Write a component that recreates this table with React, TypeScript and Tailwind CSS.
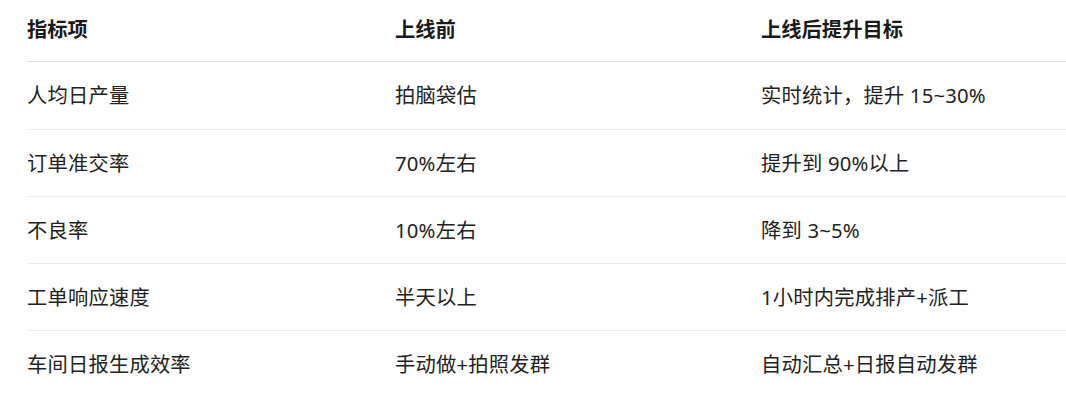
const rows: [string, string, string][] = [
  ["人均日产量", "拍脑袋估", "实时统计，提升 15~30%"],
  ["订单准交率", "70%左右", "提升到 90%以上"],
  ["不良率", "10%左右", "降到 3~5%"],
  ["工单响应速度", "半天以上", "1小时内完成排产+派工"],
  ["车间日报生成效率", "手动做+拍照发群", "自动汇总+日报自动发群"],
];

export default function App() {
  return (
    <div
      className="w-[1066px] h-[405px] bg-white pl-[27px] text-[20.3px] text-[#222222]"
      style={{ fontFamily: '"Noto Sans", "Noto Sans CJK SC", sans-serif' }}
    >
      <div className="grid grid-cols-[368px_366px_1fr] h-[62px] items-center border-b border-[#dcdcdc] font-bold text-[#1a1a1a] pb-[2px]">
        <div>指标项</div>
        <div>上线前</div>
        <div>上线后提升目标</div>
      </div>
      {rows.map((r, i) => (
        <div
          key={r[0]}
          className={`grid grid-cols-[368px_366px_1fr] h-[67px] items-center ${
            i > 0 ? "border-t border-[#eeeeee]" : ""
          }`}
        >
          {r.map((c) => (
            <div key={c} className="tracking-[0.2px]">
              {c}
            </div>
          ))}
        </div>
      ))}
    </div>
  );
}
